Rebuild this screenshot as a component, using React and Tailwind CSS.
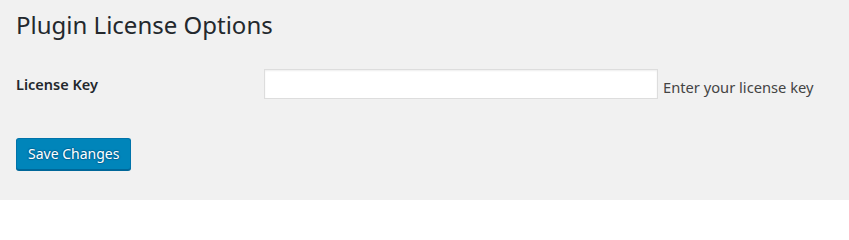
export default function App() {
  return (
    <div className="min-h-[200px] bg-[#f1f1f1] pl-4 font-['Noto_Sans',sans-serif] text-[#23282d]">
      <h1 className="pt-[10px] text-[24px] leading-[30px] font-normal">Plugin License Options</h1>

      <div className="mt-[29px] flex items-start">
        <label htmlFor="license_key" className="w-[248px] pt-[5px] text-[14.5px] leading-[20px] font-semibold">
          License Key
        </label>
        <input
          id="license_key"
          type="text"
          className="h-[30px] w-[394px] border border-[#dddddd] bg-white px-2 text-[14px] shadow-[inset_0_1px_2px_rgba(0,0,0,0.07)] outline-none"
        />
        <span className="ml-[5px] pt-[8px] text-[14.7px] leading-[20px] text-[#444444]">Enter your license key</span>
      </div>

      <button
        type="submit"
        className="mt-[39px] h-[32px] rounded-[3px] border border-[#0073aa] border-b-[#006799] bg-[#0085ba] px-[11px] text-[14px] leading-[20px] text-white shadow-[0_1px_0_#006799] [text-shadow:0_-1px_1px_#006799,1px_0_1px_#006799,0_1px_1px_#006799,-1px_0_1px_#006799]"
      >
        Save Changes
      </button>
    </div>
  )
}
